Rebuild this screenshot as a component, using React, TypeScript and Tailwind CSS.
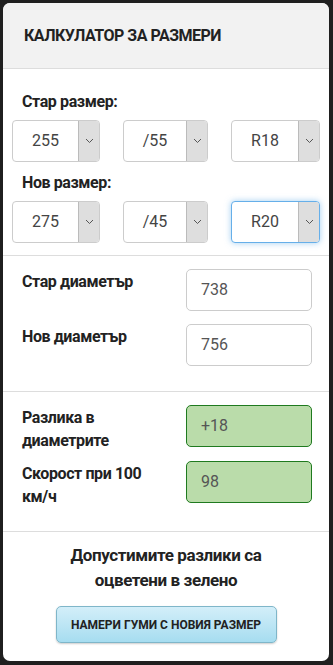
import React from 'react';

const font = { fontFamily: 'Roboto, "Noto Sans", sans-serif' };

function Chevron() {
  return (
    <svg width="9" height="6" viewBox="0 0 9 6" fill="none">
      <path d="M1 1l3.5 3.5L8 1" stroke="#555" strokeWidth="1" />
    </svg>
  );
}

function SizeSelect({ value, focused = false }: { value: string; focused?: boolean }) {
  return (
    <div
      className={`flex h-[42px] overflow-hidden rounded-[4px] border bg-white ${
        focused ? 'border-[#66afe9] shadow-[0_0_6px_rgba(102,175,233,0.6)]' : 'border-[#ccc]'
      }`}
    >
      <div className="flex flex-1 items-center justify-center text-[16px] text-[#444]">{value}</div>
      <div className="flex w-[21px] items-center justify-center border-l border-[#bbb] bg-[#dedede]">
        <Chevron />
      </div>
    </div>
  );
}

function Field({ label, value, green = false }: { label: React.ReactNode; value: string; green?: boolean }) {
  return (
    <div className="flex h-[42px] items-start">
      <div className="w-[183px] shrink-0 pl-[19px] pt-[1px] text-[16px] font-bold leading-[23px] tracking-[-0.4px] text-[#222]">
        {label}
      </div>
      <div
        className={`flex h-[42px] w-[126px] items-center rounded-[5px] border px-[14px] text-[16px] text-[#555] ${
          green ? 'border-[#1f7a1f] bg-[#badcaa]' : 'border-[#ccc] bg-white'
        }`}
      >
        {value}
      </div>
    </div>
  );
}

export default function App() {
  return (
    <div className="min-h-[665px] bg-[#1f1f1f] p-[3px] pr-[4px]" style={font}>
      <div className="overflow-hidden rounded-[7px] bg-white">
        <div className="flex h-[66px] items-center border-b border-[#ddd] bg-[#f2f2f2] px-[21px]">
          <h2 className="text-[16px] font-bold uppercase tracking-[-0.5px] text-[#222]">Калкулатор за размери</h2>
        </div>

        <div className="border-b border-[#ddd] px-[9px] pb-[12px] pt-[21px]">
          <div className="px-[10px] text-[16px] font-bold tracking-[-0.4px] text-[#222]">Стар размер:</div>
          <div className="mt-[6px] grid grid-cols-[88px_85px_89px] justify-between">
            <SizeSelect value="255" />
            <SizeSelect value="/55" />
            <SizeSelect value="R18" />
          </div>
          <div className="mt-[9px] px-[10px] text-[16px] font-bold tracking-[-0.4px] text-[#222]">Нов размер:</div>
          <div className="mt-[6px] grid grid-cols-[88px_85px_89px] justify-between">
            <SizeSelect value="275" />
            <SizeSelect value="/45" />
            <SizeSelect value="R20" focused />
          </div>
        </div>

        <div className="flex flex-col gap-[13px] border-b border-[#ddd] pb-[25px] pt-[13px]">
          <Field label="Стар диаметър" value="738" />
          <Field label="Нов диаметър" value="756" />
        </div>

        <div className="flex flex-col gap-[14px] border-b border-[#ddd] pb-[28px] pt-[13px]">
          <Field label={<>Разлика в<br />диаметрите</>} value="+18" green />
          <Field label={<>Скорост при 100<br />км/ч</>} value="98" green />
        </div>

        <div className="flex flex-col items-center pb-[18px] pt-[11px]">
          <p className="text-center text-[17px] font-bold leading-[25px] tracking-[-0.4px] text-[#222]">
            Допустимите разлики са
            <br />
            оцветени в зелено
          </p>
          <button className="mt-[13px] h-[37px] w-[221px] rounded-[5px] border border-[#7fb6c9] bg-gradient-to-b from-[#d3eef9] to-[#a6ddf0] text-[12px] font-bold uppercase tracking-[0px] text-[#222] shadow-[0_1px_2px_rgba(0,0,0,0.2)]">
            Намери гуми с новия размер
          </button>
        </div>
      </div>
    </div>
  );
}
